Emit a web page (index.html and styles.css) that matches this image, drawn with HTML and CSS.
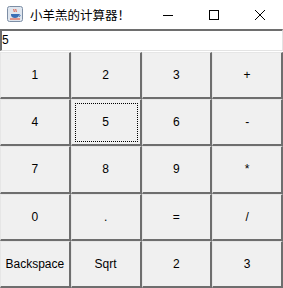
FILE: index.html
```html
<!DOCTYPE html>
<html lang="zh">
  <head>
    <meta charset="UTF-8" />
    <title>小羊羔的计算器！</title>
    <link rel="stylesheet" href="styles.css">
  </head>
  <body>
    <div class="window">
      <div class="titlebar">
        <svg class="app-icon" width="16" height="16" viewBox="0 0 16 16">
          <rect x="0.5" y="0.5" width="15" height="15" rx="2" fill="#dfe6ef" stroke="#7d8ea5"/>
          <path d="M7 3c-1 1 1 2 0 3M9 3c-1 1 1 2 0 3" stroke="#e0462b" stroke-width="1" fill="none"/>
          <path d="M4 8h8v1c0 2-2 3-4 3s-4-1-4-3z" fill="#3a6fb5"/>
          <path d="M12 8.5c1.5 0 1.5 2 0 2" stroke="#3a6fb5" fill="none"/>
          <path d="M3 13h10" stroke="#e0462b"/>
        </svg>
        <span class="title">小羊羔的计算器！</span>
        <div class="controls">
          <span class="ctl">
            <svg width="12" height="12" viewBox="0 0 12 12"><path d="M1 6.5h10" stroke="#000"/></svg>
          </span>
          <span class="ctl">
            <svg width="12" height="12" viewBox="0 0 12 12"><rect x="1.5" y="1.5" width="9" height="9" fill="none" stroke="#000"/></svg>
          </span>
          <span class="ctl">
            <svg width="12" height="12" viewBox="0 0 12 12"><path d="M1 1l10 10M11 1L1 11" stroke="#000"/></svg>
          </span>
        </div>
      </div>
      <div class="display">5</div>
      <div class="keys">
        <button class="key">1</button>
        <button class="key">2</button>
        <button class="key">3</button>
        <button class="key">+</button>
        <button class="key">4</button>
        <button class="key focused">5</button>
        <button class="key">6</button>
        <button class="key">-</button>
        <button class="key">7</button>
        <button class="key">8</button>
        <button class="key">9</button>
        <button class="key">*</button>
        <button class="key">0</button>
        <button class="key">.</button>
        <button class="key">=</button>
        <button class="key">/</button>
        <button class="key">Backspace</button>
        <button class="key">Sqrt</button>
        <button class="key">2</button>
        <button class="key">3</button>
      </div>
    </div>
  </body>
</html>
```

FILE: styles.css
```css
* {
  margin: 0;
  padding: 0;
  box-sizing: border-box;
}
html,
body {
  height: 100%;
  overflow: hidden;
}
body {
  background: #fff;
  font-family: "Liberation Sans", Arial, sans-serif;
}
.window {
  height: 288px;
  display: flex;
  flex-direction: column;
}
.titlebar {
  height: 29px;
  display: flex;
  align-items: center;
  background: #fff;
}
.app-icon {
  margin-left: 7px;
  margin-top: -1px;
}
.title {
  margin-left: 7px;
  font-family: "Noto Sans CJK SC", "Liberation Sans", sans-serif;
  font-size: 12.5px;
  color: #000;
  margin-top: -1px;
}
.controls {
  margin-left: auto;
  display: flex;
}
.ctl {
  width: 46px;
  height: 29px;
  display: flex;
  align-items: center;
  justify-content: center;
}
.display {
  height: 22px;
  background: #fff;
  border-top: 2px solid #6e6e6e;
  border-left: 2px solid #6e6e6e;
  border-right: 1px solid #e3e3e3;
  border-bottom: 1px solid #e3e3e3;
  font-size: 12px;
  line-height: 18px;
  color: #000;
}
.keys {
  flex: 1;
  margin-top: 1px;
  display: grid;
  grid-template-columns: repeat(4, 1fr);
  grid-template-rows: repeat(5, 1fr);
}
.key {
  background: #f0f0f0;
  border-style: solid;
  border-width: 1px 2px 2px 1px;
  border-color: #e6e6e6 #6e6e6e #6e6e6e #e6e6e6;
  font-family: "Liberation Sans", Arial, sans-serif;
  font-size: 12px;
  color: #000;
}
.key.focused {
  outline: 1px dotted #000;
  outline-offset: -5px;
}
```
